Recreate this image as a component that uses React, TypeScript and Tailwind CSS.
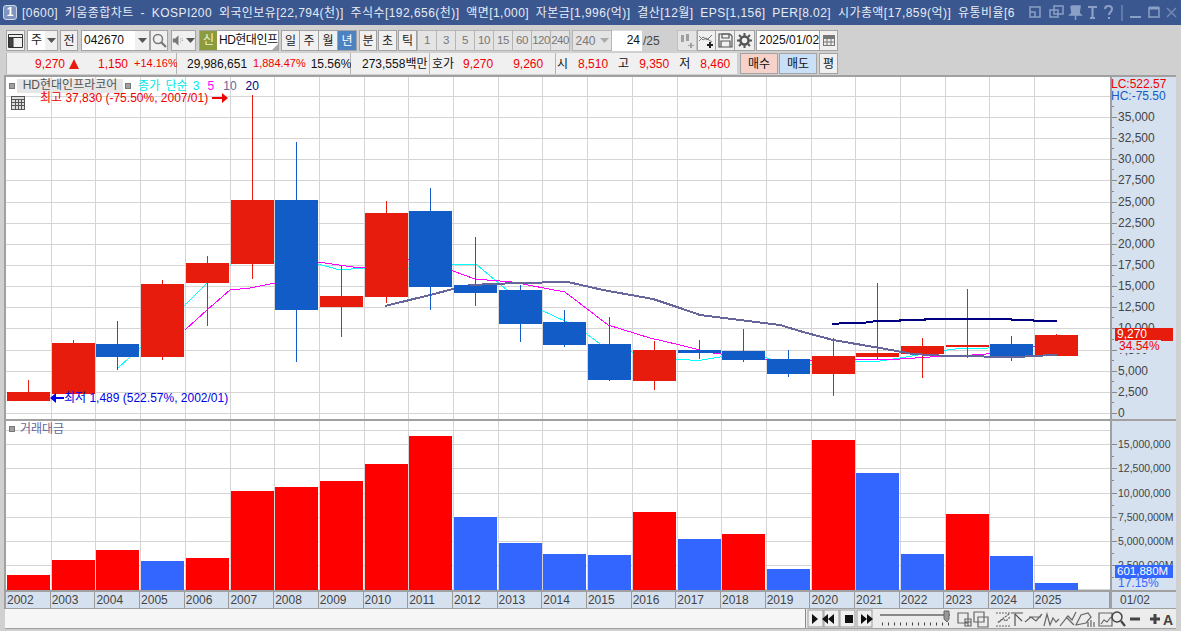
import React from "react";

const F = '"Liberation Sans","Noto Sans CJK KR",sans-serif';
const X0 = 7;
const STEP = 44.7;
const xs = Array.from({ length: 24 }, (_, i) => Math.round(X0 + i * STEP));
const years = xs.map((_, i) => 2002 + i);

type C = [string, number, number, number, number];
const candles: C[] = [
  ["r", 392, 401, 380, 401], ["r", 343, 394, 340, 394], ["b", 344, 357, 321, 370], ["r", 284, 357, 280, 360],
  ["r", 263, 283, 256, 326], ["r", 200, 264, 95, 279], ["b", 200, 310, 142, 362], ["r", 296, 307, 266, 337],
  ["r", 213, 297, 201, 303], ["b", 211, 287, 188, 310], ["b", 285, 293, 237, 306], ["b", 290, 324, 285, 342],
  ["b", 322, 345, 310, 347], ["b", 344, 380, 317, 381], ["r", 350, 381, 341, 390], ["b", 350, 353, 340, 359],
  ["b", 351, 360, 329, 362], ["b", 359, 374, 350, 377], ["r", 356, 374, 338, 396], ["r", 353, 357, 283, 359],
  ["r", 346, 354, 338, 378], ["r", 345, 347, 289, 358], ["b", 344, 356, 336, 361], ["r", 335, 356, 334, 356],
];
const vols: [string, number][] = [
  ["r", 575], ["r", 560], ["r", 550], ["b", 561], ["r", 558], ["r", 491], ["r", 487], ["r", 481], ["r", 464], ["r", 436],
  ["b", 517], ["b", 543], ["b", 554], ["b", 555], ["r", 512], ["b", 539], ["r", 534], ["b", 569], ["r", 440], ["b", 473],
  ["b", 554], ["r", 514], ["b", 556], ["b", 583],
];
const priceLabels = ["35,000", "32,500", "30,000", "27,500", "25,000", "22,500", "20,000", "17,500", "15,000", "12,500", "10,000", "7,500", "5,000", "2,500", "0"];
const volLabels = ["15,000,000", "12,500,000", "10,000,000", "7,500,000M", "5,000,000M", "2,500,000M"];

const ma3 = "118,368 140,348 165,323 187,303 207,283 230,265 250,245 275,262 318,264 340,270 363,268 407,269 430,264 453,264 476,264 483,270 507,290 541,310 567,322 587,334 600,344 632,352 675,359 690,360 702,360 720,357 767,358 773,360 810,365 855,362 880,361 900,358 947,350 963,348 988,348 1033,347 1057,340";
const ma5 = "185,330 207,310 230,290 250,288 275,283 300,270 318,262 360,268 407,259 453,271 475,279 512,282 565,292 608,325 650,338 680,345 700,350 713,353 763,359 810,361 857,359 900,359 930,357 972,355 1000,353 1033,347 1057,342";
const ma10 = "385,306 430,295 453,289 470,285 517,283 568,282 603,290 653,299 680,308 700,315 780,325 803,332 833,340 880,348 913,354 947,356 1020,357 1030,356 1057,355";
const ma20 = "832,324 847,323 862,323 877,321 900,321 900,320 925,320 925,319 1011,319 1012,320 1033,320 1034,321 1057,321";

const Btn = ({ w, children, className = "" }: { w: string; children?: React.ReactNode; className?: string }) => (
  <div className={`${w} h-[21px] shrink-0 flex items-center justify-center border border-[#a3a3a3] bg-[#f0f0f0] text-[#222] ${className}`}>{children}</div>
);
const Arrow = ({ c = "#555" }: { c?: string }) => (
  <svg width="9" height="5" viewBox="0 0 9 5"><path d="M0 0h9L4.500 5z" fill={c} /></svg>
);
const Sq = () => <span className="w-[6px] h-[6px] shrink-0 bg-[#a0a0a0] border border-[#777] inline-block" />;

const TitleIcons = () => (
  <svg width="152" height="16" viewBox="1029 5 152 16" fill="none" stroke="#8ba0c6" strokeWidth="1.500">
    <path d="M1030 7h10v10h-10zM1030 12h5v5" />
    <path d="M1054 6h9v8h-9zM1050 10h8v7h-8z" />
    <path d="M1072 6h8v1l-1 6 2 2h-11l2-2-1-6zM1075.500 15v5" fill="#8ba0c6" />
    <path d="M1088 7h9M1092.500 7v11M1090 18h5" strokeWidth="2.200" />
    <path d="M1105 9c0-4 7-4 7 0 0 3-3 3-3 6M1109 17v2" strokeWidth="2" />
    <path d="M1122 5v16" stroke="#6f86b0" />
    <path d="M1130 17h11" strokeWidth="2" />
    <path d="M1149 8h10v9h-10z" /><path d="M1149 8h10" strokeWidth="3" />
    <path d="M1167 8l9 9M1176 8l-9 9" stroke="#7289b6" />
  </svg>
);

const Disabled = ({ t }: { t: string }) => (
  <div className="w-[20px] h-[21px] shrink-0 flex items-center justify-center border border-[#b5b5b5] -ml-px bg-[#e4e4e4] text-[#777] text-[11.500px] tracking-[-0.5px]">{t}</div>
);

const ToolbarOne = () => (
  <div className="h-[21px] mt-[5px] ml-[6px] flex items-center text-[12px] text-[#222]">
    <Btn w="w-[19px]">
      <svg width="15" height="14" viewBox="0 0 15 14" fill="none" stroke="#333"><path d="M.5.500h14v13H.500zM.5 3.500h14" /><path d="M1 4h4v9H1z" fill="#444" /></svg>
    </Btn>
    <div className="ml-[2px] w-[31px] h-[21px] flex border border-[#a3a3a3] bg-white">
      <span className="w-[17px] text-center">주</span>
      <span className="flex-1 bg-[#f0f0f0] flex items-center justify-center"><Arrow /></span>
    </div>
    <Btn w="w-[18px] ml-[2px]">전</Btn>
    <div className="ml-[3px] w-[69px] h-[21px] flex border border-[#a3a3a3] bg-white">
      <span className="w-[53px] pl-[2px] text-[#111]">042670</span>
      <span className="flex-1 bg-[#f0f0f0] flex items-center justify-center"><Arrow /></span>
    </div>
    <Btn w="w-[18px]">
      <svg width="15" height="15" viewBox="0 0 15 15" fill="none" stroke="#777" strokeWidth="1.500"><circle cx="6" cy="6" r="4.500" /><path d="M9 9l5 5" strokeWidth="2.200" /></svg>
    </Btn>
    <div className="ml-[3px] w-[25px] h-[21px] flex border border-[#a3a3a3] bg-[#f0f0f0] items-center">
      <svg width="14" height="13" viewBox="0 0 16 13" fill="#777"><path d="M1 4h3l4-4v13l-4-4H1z" /><path d="M10 4h1v1h-1zM12 4h1v1h-1zM10 8h1v1h-1zM12 6h1v1h-1z" /></svg>
      <span className="ml-[1px]"><Arrow /></span>
    </div>
    <div className="relative ml-[3px] w-[80px] h-[21px] flex border border-[#a3a3a3] bg-white">
      <span className="w-[17px] bg-[#8b9b3e] text-[#f2f5d8] text-center">신</span>
      <span className="flex-1 pl-[2px] whitespace-nowrap text-[#111] tracking-[-0.5px]">HD현대인프</span>
      <svg className="absolute right-0 bottom-0" width="6" height="6" viewBox="0 0 6 6"><path d="M6 0v6H0z" fill="#aaa" /></svg>
    </div>
    <Btn w="w-[19px] ml-[2px]">일</Btn>
    <Btn w="w-[20px] -ml-px">주</Btn>
    <Btn w="w-[20px] -ml-px">월</Btn>
    <Btn w="w-[20px] -ml-px" className="!bg-[#4d82c2] !text-white">년</Btn>
    <Btn w="w-[18px] ml-[2px]">분</Btn>
    <Btn w="w-[19px] ml-[1px]">초</Btn>
    <Btn w="w-[19px] ml-[1px]">틱</Btn>
    <div className="flex ml-px">
      {["1", "3", "5", "10", "15", "60", "120", "240"].map((t) => <Disabled key={t} t={t} />)}
    </div>
    <div className="ml-[2px] w-[40px] h-[21px] flex items-center border border-[#b5b5b5] bg-[#e4e4e4] text-[#777]">
      <span className="w-[25px] text-center">240</span><span className="ml-[2px]"><Arrow c="#aaa" /></span>
    </div>
    <div className="w-[30px] h-[21px] bg-white text-right pr-[2px] text-[#111] border-t border-[#ddd]">24</div>
    <span className="w-[22px] pl-px text-[#444]">/25</span>
    <div className="ml-[13px] w-[20px] h-[21px] flex items-center justify-center border border-[#c0c0c0] bg-[#e4e4e4]">
      <svg width="16" height="15" viewBox="0 0 16 15" fill="#a0a0a0"><path d="M2 2h3v7H2zM7 1h3v7H7zM11 10h2v2h2v1h-2v2h-2v-2H9v-1h2z" /></svg>
    </div>
    <Btn w="w-[19px]">
      <svg width="17" height="15" viewBox="0 0 17 15" fill="none" stroke="#777"><path d="M1 3l4 4 3-2 6 4" /><path d="M1 8l4-4 4 3 5-5" /><path d="M12 9v6M9 12h6" stroke="#222" strokeWidth="2" /></svg>
    </Btn>
    <Btn w="w-[20px] -ml-px">
      <svg width="15" height="15" viewBox="0 0 15 15" fill="none" stroke="#555" strokeWidth="1.200"><path d="M1 1h11l2 2v11H1z" /><path d="M4 1h7v4H4zM3 14V8h9v6" /></svg>
    </Btn>
    <Btn w="w-[21px] -ml-px">
      <svg width="15" height="15" viewBox="0 0 15 15"><circle cx="7.500" cy="7.500" r="4" fill="none" stroke="#555" strokeWidth="2.500" /><path d="M7.500 0v3M7.500 12v3M0 7.500h3M12 7.500h3M2 2l2 2M11 11l2 2M13 2l-2 2M4 11l-2 2" stroke="#555" strokeWidth="2" /></svg>
    </Btn>
    <div className="ml-[1px] w-[64px] h-[21px] border border-[#a3a3a3] bg-white pl-[2px] text-[#111] whitespace-nowrap overflow-hidden">2025/01/02</div>
    <Btn w="w-[19px] -ml-px">
      <svg width="12" height="11" viewBox="0 0 12 11"><path d="M0 0h12v11H0z" fill="#777" /><path d="M1 4h10v6H1z" fill="#eee" /><path d="M4 4v6M8 4v6M1 7h10" stroke="#777" /></svg>
    </Btn>
  </div>
);

const Cell = ({ w, className = "", children }: { w: string; className?: string; children?: React.ReactNode }) => (
  <div className={`${w} h-[21px] shrink-0 flex items-center border-r border-[#b5b5b5] bg-[#f0f0f0] ${className}`}>{children}</div>
);
const R = "text-[#f00000]";
const ToolbarTwo = () => (
  <div className="h-[21px] mt-[2px] ml-[6px] flex items-center text-[12px] whitespace-nowrap text-[#111]">
    <Cell w="w-[171px] border-l" className={R}>
      <span className="ml-[28px] w-[31px] shrink-0">9,270</span>
      <svg className="ml-[3px] shrink-0" width="10" height="10" viewBox="0 0 10 10"><path d="M5 0l5 10H0z" fill="#e81c0c" /></svg>
      <span className="ml-[19px] shrink-0">1,150</span>
      <span className="ml-[6px] text-[11px] shrink-0">+14.16%</span>
    </Cell>
    <Cell w="w-[174px]">
      <span className="ml-[10px]">29,986,651</span>
      <span className={`ml-[6px] text-[11px] ${R}`}>1,884.47%</span>
      <span className="ml-[5px]">15.56%</span>
    </Cell>
    <Cell w="w-[79px]"><span className="ml-[11px]">273,558백만</span></Cell>
    <Cell w="w-[126px]">
      <span className="ml-[2px]">호가</span>
      <span className={`ml-[9px] ${R}`}>9,270</span>
      <span className={`ml-[20px] ${R}`}>9,260</span>
    </Cell>
    <Cell w="w-[181px]" className="border-r-0">
      <span className="ml-[1px]">시</span>
      <span className={`ml-[10px] ${R}`}>8,510</span>
      <span className="ml-[10px]">고</span>
      <span className={`ml-[10px] ${R}`}>9,350</span>
      <span className="ml-[10px]">저</span>
      <span className={`ml-[10px] ${R}`}>8,460</span>
    </Cell>
    <div className="w-[38px] h-[21px] ml-[3px] flex items-center justify-center border border-[#a3a3a3] bg-[#f6d2cb]">매수</div>
    <div className="w-[38px] h-[21px] ml-[1px] flex items-center justify-center border border-[#a3a3a3] bg-[#c9e0f7]">매도</div>
    <div className="w-[19px] h-[21px] ml-[2px] flex items-center justify-center border border-[#a3a3a3] bg-[#f0f0f0]">평</div>
  </div>
);

const PricePane = () => {
  const grid = Array.from({ length: 16 }, (_, i) => Math.round(413 - i * 21.14));
  return (
    <div className="h-[344px] flex border-b-2 border-[#a0a0a0]">
      <div className="relative w-[1104px] bg-white">
        <svg width="1104" height="342" viewBox="6 77 1104 342" className="block" shapeRendering="crispEdges">
          {grid.map((y) => <rect key={y} x="6" y={y} width="1104" height="1" fill="#d4d4d4" />)}
          {xs.slice(1).map((x) => <rect key={x} x={x - 1} y="77" width="1" height="342" fill="#d4d4d4" />)}
          <polyline points={ma3} fill="none" stroke="#00ffff" strokeWidth="1" />
          <polyline points={ma5} fill="none" stroke="#ff00ff" strokeWidth="1" />
          <polyline points={ma10} fill="none" stroke="#66669a" strokeWidth="2" />
          {candles.map(([k, t, b, wt, wb], i) => {
            const col = k === "r" ? "#e81c0c" : "#125cc8";
            return (
              <g key={i}>
                <rect x={xs[i] + 21} y={wt} width="1" height={wb - wt} fill={col} />
                <rect x={xs[i]} y={t} width="43" height={b - t} fill={col} />
              </g>
            );
          })}
          <polyline points={ma10.split(" ").filter((p) => parseInt(p) > 460).join(" ")} fill="none" stroke="#66669a" strokeWidth="2" />
          <polyline points={ma20} fill="none" stroke="#000080" strokeWidth="2" />
        </svg>
        <div className="absolute left-[3px] top-[2px] flex items-center gap-[2px] text-[12px] leading-[13px] whitespace-nowrap">
          <Sq />
          <span className="w-[106px] h-[14px] bg-[#e6e6e6] text-center text-[#555]">HD현대인프라코어</span>
          <Sq />
          <span className="ml-[5px] text-[#00e8e8] [word-spacing:2px]">종가 단순 3</span>
          <span className="ml-[6px] text-[#ff00ff]">5</span>
          <span className="ml-[7px] text-[#66669a]">10</span>
          <span className="ml-[7px] text-[#000080]">20</span>
        </div>
        <div className="absolute left-[5px] top-[19px] w-[14px] h-[14px] border border-[#555] bg-[#ddd]">
          <svg width="12" height="12" viewBox="0 0 12 12" fill="none" stroke="#555"><path d="M0 2.500h12M0 5.500h12M0 8.500h12M3.500 2v10M6.500 2v10M9.500 2v10" /></svg>
        </div>
        <div className="absolute left-[34px] top-[14px] flex items-center text-[12px] leading-[14px] text-[#f00000] whitespace-nowrap">
          최고 37,830 (-75.50%, 2007/01)
          <svg className="ml-[4px]" width="16" height="10" viewBox="0 0 16 10"><path d="M0 4h10V0l6 5-6 5V6H0z" fill="#f00000" /></svg>
        </div>
        <div className="absolute left-[44px] top-[314px] flex items-center text-[12px] leading-[14px] text-[#0000e8] whitespace-nowrap">
          <svg width="14" height="10" viewBox="0 0 14 10"><path d="M14 4H6V0L0 5l6 5V6h8z" fill="#0000e8" /></svg>
          최저 1,489 (522.57%, 2002/01)
        </div>
      </div>
      <div className="relative w-[66px] bg-[#d6e1ef] border-l-2 border-[#a0a0a0] text-[12px]">
        <div className="absolute left-[-1px] top-[1px] leading-[12px] text-[#f00000] whitespace-nowrap">LC:522.57</div>
        <div className="absolute left-[-1px] top-[13px] leading-[12px] text-[#125cc8] whitespace-nowrap">HC:-75.50</div>
        <svg width="64" height="342" viewBox="1112 77 64 342" className="block overflow-visible" shapeRendering="crispEdges">
          {grid.slice(0, 15).map((y) => <rect key={y} x="1112" y={y} width="5" height="1" fill="#888" />)}
          {grid.slice(0, 15).map((y) => <rect key={y} x="1112" y={y - 11} width="2" height="1" fill="#888" />)}
          {priceLabels.map((l, i) => (
            <text key={l} x="1118" y={Math.round(113 + i * 21.14) + 8} fontSize="12" fill="#444" fontFamily={F}>{l}</text>
          ))}
        </svg>
        <div className="absolute left-[3px] top-[251px] w-[58px] h-[13px] leading-[13px] bg-[#e81c0c] text-white pl-[2px]">9,270</div>
        <div className="absolute left-[6px] top-[263px] leading-[13px] text-[#f00000] bg-[#d6e1ef] px-px">34.54%</div>
        <div className="absolute right-[1px] bottom-[-12px] w-[8px] h-[7px] bg-[#444]" />
      </div>
    </div>
  );
};

const VolPane = () => {
  const grid = [444, 468, 493, 517, 541, 565, 589];
  const h = [430, ...grid];
  return (
    <div className="h-[169px] flex">
      <div className="relative w-[1104px] bg-white">
        <svg width="1104" height="169" viewBox="6 421 1104 169" className="block" shapeRendering="crispEdges">
          {h.map((y) => <rect key={y} x="6" y={y} width="1104" height="1" fill="#d4d4d4" />)}
          {xs.slice(1).map((x) => <rect key={x} x={x - 1} y="421" width="1" height="169" fill="#d4d4d4" />)}
          {vols.map(([k, t], i) => (
            <rect key={i} x={xs[i]} y={t} width="43" height={590 - t} fill={k === "r" ? "#ff0000" : "#3366ff"} />
          ))}
        </svg>
        <div className="absolute left-[3px] top-[1px] flex items-center gap-[5px] text-[12px] leading-[14px] text-[#66669a]">
          <Sq /><span>거래대금</span>
        </div>
      </div>
      <div className="relative w-[66px] bg-[#d6e1ef] border-l-2 border-[#a0a0a0] text-[12px]">
        <svg width="64" height="169" viewBox="1112 421 64 169" className="block overflow-visible" shapeRendering="crispEdges">
          {grid.slice(0, 6).map((y) => <rect key={y} x="1112" y={y} width="5" height="1" fill="#888" />)}
          {grid.slice(0, 6).map((y) => <rect key={y} x="1112" y={y + 12} width="2" height="1" fill="#888" />)}
          {volLabels.map((l, i) => (
            <text key={l} x="1118" y={grid[i] + 4} fontSize="10.500" fill="#444" fontFamily={F}>{l}</text>
          ))}
        </svg>
        <div className="absolute left-[3px] top-[144px] w-[58px] h-[13px] leading-[13px] bg-[#3366ff] text-white pl-[2px] whitespace-nowrap text-[11.500px]">601,880M</div>
        <div className="absolute left-[6px] top-[156px] leading-[13px] text-[#3366ff]">17.15%</div>
      </div>
    </div>
  );
};

const TimeAxis = () => (
  <div className="h-[19px] flex border-t-2 border-b border-[#a0a0a0] bg-[#d6e1ef] text-[12px] text-[#444]">
    <div className="w-[1104px] flex">
      {years.map((y, i) => (
        <span key={y} className={`${i === 23 ? "flex-1" : "w-[44.700px]"} h-full leading-[16px] pl-px border-r border-[#9a9a9a] shrink-0`}>{y}</span>
      ))}
    </div>
    <span className="pl-[8px] leading-[16px] border-l-2 border-[#a0a0a0] w-[66px]">01/02</span>
  </div>
);

const BottomBar = () => (
  <div className="h-[20px] ml-[5px] w-[1171px] flex items-center border-b border-[#a0a0a0] bg-[#ececec]">
    <div className="w-[801px] h-[19px] bg-[#f6f6f6] border-r border-[#888]" />
    <svg width="370" height="20" viewBox="806 609 370 20" className="shrink-0">
      {[808, 824, 840, 857].map((x) => <rect key={x} x={x} y="610" width="15" height="17" fill="#f0f0f0" stroke="#999" />)}
      <path d="M812 614l6 5-6 5zM834 614l-6 5 6 5zM828 614l-6 5 6 5zM845 615h8v8h-8zM861 614l6 5-6 5zM867 614l6 5-6 5z" fill="#111" />
      <path d="M880 615h70" stroke="#888" strokeWidth="2" />
      <path d="M944 611h5v8l-2 3-3-3z" fill="#999" stroke="#666" />
      <path d="M882 624h68" stroke="#444" strokeDasharray="1 5" strokeWidth="3" />
      <g fill="none" stroke="#666" strokeWidth="1.200">
        <path d="M958 613h10v10h-10zM965 619h6v7h-6zM965 622h6M968 619v7" />
        <path d="M974 612h10v10h-10zM978 617h10v10h-10z" />
        <path d="M996 613h14M996 626h14M1009 614l-12 9M999 622l4-3 3 2 4-4" strokeDasharray="2 1" />
        <path d="M1011 613h12M1015 614v12M1015 614l7 7" stroke="#555" />
        <path d="M1025 622l6-5 5 4 6-7M1029 617h12" />
        <path d="M1044 626l3-12 3 11 3-7 3 4 3-3" />
        <path d="M1060 626l8-10 4 4 4-8M1066 617l8 8" />
        <path d="M1076 625l5-10 7-2 3 4-5 6zM1088 622v5M1091 620v7M1094 622v5" />
        <path d="M1099 613h13v13h-13zM1101 624l3-4 3 2 4-5" />
        <circle cx="1117" cy="617" r="5" stroke="#444" strokeWidth="1.500" />
        <path d="M1121 621l4 5" stroke="#444" strokeWidth="2.200" />
      </g>
      <path d="M1130 619h10M1150 619h10M1155 614v10" stroke="#444" strokeWidth="3" fill="none" />
      <text x="1163" y="625" fontSize="14" fontWeight="bold" fill="#444" fontFamily={F}>A</text>
    </svg>
  </div>
);

export default function App() {
  return (
    <div className="w-[1181px] h-[631px] overflow-hidden bg-[#d0d0d0] flex flex-col" style={{ fontFamily: F }}>
      <div className="h-[25px] shrink-0 bg-[#3b578f] flex items-center">
        <div className="ml-[3px] w-[14px] h-[15px] rounded-[3px] border border-[#cfd8ea] bg-[#7f95c0] text-white text-[12px] leading-[13px] text-center font-bold">1</div>
        <div className="ml-[5px] w-[1005px] overflow-hidden whitespace-nowrap text-[12px] text-[#e6ebf5] tracking-[0.450px] [word-spacing:3px]">
          [0600] 키움종합차트 - KOSPI200 외국인보유[22,794(천)] 주식수[192,656(천)] 액면[1,000] 자본금[1,996(억)] 결산[12월] EPS[1,156] PER[8.02] 시가총액[17,859(억)] 유통비율[6
        </div>
        <div className="ml-[2px]"><TitleIcons /></div>
      </div>
      <ToolbarOne />
      <ToolbarTwo />
      <div className="mt-[1px] ml-[4px] w-[1172px] border-l-2 border-t-2 border-[#a0a0a0] shrink-0">
        <PricePane />
        <VolPane />
        <TimeAxis />
      </div>
      <BottomBar />
    </div>
  );
}
